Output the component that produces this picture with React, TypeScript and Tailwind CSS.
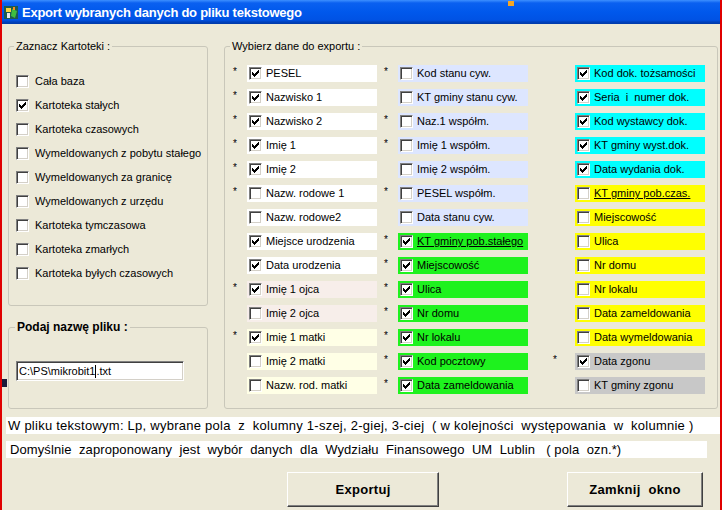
import React from "react";

type Row = { s: boolean; c: boolean; t: string; bg: string; u?: boolean };

const W = "bg-white";
const PINK = "bg-[#F7EEEA]";
const LY = "bg-[#FFFFE6]";
const LB = "bg-[#DDE6FF]";
const GR = "bg-[#1EF21E]";
const CY = "bg-[#00FFFF]";
const YE = "bg-[#FFFF00]";
const GY = "bg-[#C8C8C8]";

const col1: Row[] = [
  { s: true, c: true, t: "PESEL", bg: W },
  { s: true, c: true, t: "Nazwisko 1", bg: W },
  { s: true, c: true, t: "Nazwisko 2", bg: W },
  { s: true, c: true, t: "Imię 1", bg: W },
  { s: true, c: true, t: "Imię 2", bg: W },
  { s: true, c: false, t: "Nazw. rodowe 1", bg: W },
  { s: false, c: false, t: "Nazw. rodowe2", bg: W },
  { s: false, c: true, t: "Miejsce urodzenia", bg: W },
  { s: false, c: true, t: "Data urodzenia", bg: W },
  { s: true, c: true, t: "Imię 1 ojca", bg: PINK },
  { s: false, c: false, t: "Imię 2 ojca", bg: PINK },
  { s: true, c: true, t: "Imię 1 matki", bg: LY },
  { s: false, c: false, t: "Imię 2 matki", bg: LY },
  { s: false, c: false, t: "Nazw. rod. matki", bg: LY },
];

const col2: Row[] = [
  { s: true, c: false, t: "Kod stanu cyw.", bg: LB },
  { s: false, c: false, t: "KT gminy stanu cyw.", bg: LB },
  { s: true, c: false, t: "Naz.1 współm.", bg: LB },
  { s: true, c: false, t: "Imię 1 współm.", bg: LB },
  { s: false, c: false, t: "Imię 2 współm.", bg: LB },
  { s: true, c: false, t: "PESEL współm.", bg: LB },
  { s: false, c: false, t: "Data stanu cyw.", bg: LB },
  { s: true, c: true, t: "KT gminy pob.stałego", bg: GR, u: true },
  { s: true, c: true, t: "Miejscowość", bg: GR },
  { s: true, c: true, t: "Ulica", bg: GR },
  { s: true, c: true, t: "Nr domu", bg: GR },
  { s: true, c: true, t: "Nr lokalu", bg: GR },
  { s: true, c: true, t: "Kod pocztowy", bg: GR },
  { s: true, c: true, t: "Data zameldowania", bg: GR },
];

const col3: Row[] = [
  { s: false, c: true, t: "Kod dok. tożsamości", bg: CY },
  { s: false, c: true, t: "Seria  i  numer dok.", bg: CY },
  { s: false, c: true, t: "Kod wystawcy dok.", bg: CY },
  { s: false, c: true, t: "KT gminy wyst.dok.", bg: CY },
  { s: false, c: true, t: "Data wydania dok.", bg: CY },
  { s: false, c: false, t: "KT gminy pob.czas.", bg: YE, u: true },
  { s: false, c: false, t: "Miejscowość", bg: YE },
  { s: false, c: false, t: "Ulica", bg: YE },
  { s: false, c: false, t: "Nr domu", bg: YE },
  { s: false, c: false, t: "Nr lokalu", bg: YE },
  { s: false, c: false, t: "Data zameldowania", bg: YE },
  { s: false, c: false, t: "Data wymeldowania", bg: YE },
  { s: true, c: true, t: "Data zgonu", bg: GY },
  { s: false, c: false, t: "KT gminy zgonu", bg: GY },
];

const kartoteki: { t: string; c: boolean }[] = [
  { t: "Cała baza", c: false },
  { t: "Kartoteka stałych", c: true },
  { t: "Kartoteka czasowych", c: false },
  { t: "Wymeldowanych z pobytu stałego", c: false },
  { t: "Wymeldowanych za granicę", c: false },
  { t: "Wymeldowanych z urzędu", c: false },
  { t: "Kartoteka tymczasowa", c: false },
  { t: "Kartoteka zmarłych", c: false },
  { t: "Kartoteka byłych czasowych", c: false },
];

function Check({ checked }: { checked: boolean }) {
  return (
    <span className="flex h-[13px] w-[13px] shrink-0 items-center justify-center border-t border-l border-t-[#808080] border-l-[#808080] border-b border-r border-b-white border-r-white bg-white shadow-[inset_1px_1px_0_#404040,inset_-1px_-1px_0_#D4D0C8]">
      {checked && (
        <svg width="7" height="7" viewBox="0 0 7 7" shapeRendering="crispEdges">
          <path
            d="M6 0h1v3h-1v1h-1v1h-1v1h-1v1h-1v-1h-1v-1h-1v-3h1v1h1v1h1v-1h1v-1h1z"
            fill="#000"
          />
        </svg>
      )}
    </span>
  );
}

function Column({ rows, starW }: { rows: Row[]; starW: string }) {
  return (
    <div className="flex flex-col gap-[7px]">
      {rows.map((r, i) => (
        <div key={i} className="flex h-[17px]">
          <span className={`${starW} shrink-0 pt-[1px] text-[10px] leading-[12px] text-black`}>
            {r.s ? "*" : ""}
          </span>
          <div className={`flex w-[130px] items-center ${r.bg}`}>
            <span className="ml-[2px]">
              <Check checked={r.c} />
            </span>
            <span
              className={`ml-[4px] whitespace-pre text-[11px] leading-[17px] text-black ${
                r.u ? "underline" : ""
              }`}
            >
              {r.t}
            </span>
          </div>
        </div>
      ))}
    </div>
  );
}

export default function App() {
  return (
    <div className="relative flex h-[510px] w-[722px] flex-col overflow-hidden border-l-2 border-r-2 border-[#E00000] bg-[#ECE9D8] font-['Liberation_Sans',Arial,sans-serif] text-black">
      {/* title bar */}
      <div className="flex h-[24px] shrink-0 items-center bg-[linear-gradient(to_bottom,#3D8FFF_0px,#0A60F0_3px,#0058EC_12px,#0052E4_20px,#0040BC_22px,#003AA8_24px)]">
        <svg width="17" height="17" viewBox="0 0 17 17" className="ml-[1px]">
          <rect x="1" y="2" width="14" height="13" fill="#1E5A50" />
          <path d="M3 4h5v4H3z" fill="#F6D23C" />
          <path d="M9 5l5 2-2 7-4-2z" fill="#3FBF3F" />
          <path d="M4 9h3v5H4z" fill="#E8E8E8" />
          <path d="M10 3h2v3h-2z" fill="#FF8C1A" />
        </svg>
        <span className="ml-[2px] text-[13px] font-bold leading-none tracking-[-0.25px] text-white">
          Export wybranych danych do pliku tekstowego
        </span>
      </div>

      {/* main area */}
      <div className="mt-[16px] flex pl-[6px]">
        {/* left column */}
        <div className="flex w-[200px] flex-col">
          <fieldset className="h-[266px] rounded-[3px] border border-[#C9C7BA]">
            <legend className="ml-[5px] px-[2px] text-[11px] leading-[12px]">
              Zaznacz Kartoteki :
            </legend>
            <div className="mt-[17px] ml-[7px] flex flex-col">
              {kartoteki.map((k, i) => (
                <div key={i} className="flex h-[24px] items-center">
                  <Check checked={k.c} />
                  <span className="ml-[6px] text-[11px] leading-none">{k.t}</span>
                </div>
              ))}
            </div>
          </fieldset>

          <fieldset className="mt-[14px] h-[89px] rounded-[3px] border border-[#C9C7BA]">
            <legend className="ml-[6px] px-[2px] text-[12px] font-bold leading-[14px]">
              Podaj nazwę pliku :
            </legend>
            <div className="mt-[27px] ml-[7px] flex h-[20px] w-[168px] items-center border-t border-l border-t-[#808080] border-l-[#808080] border-b border-r border-b-white border-r-white bg-white pl-[2px] shadow-[inset_1px_1px_0_#404040,inset_-1px_-1px_0_#D4D0C8]">
              <span className="text-[11px] leading-none">C:\PS\mikrobit1</span>
              <span className="h-[13px] w-[1px] bg-black" />
              <span className="text-[11px] leading-none">.txt</span>
            </div>
          </fieldset>
        </div>

        {/* right group */}
        <fieldset className="ml-[16px] h-[369px] w-[494px] rounded-[3px] border border-[#C9C7BA]">
          <legend className="ml-[5px] px-[2px] text-[11px] leading-[12px]">
            Wybierz dane do exportu :
          </legend>
          <div className="mt-[13px] ml-[8px] flex">
            <Column rows={col1} starW="w-[14px]" />
            <div className="ml-[7px]">
              <Column rows={col2} starW="w-[14px]" />
            </div>
            <div className="ml-[25px]">
              <Column rows={col3} starW="w-[22px]" />
            </div>
          </div>
        </fieldset>
      </div>

      {/* info lines */}
      <div className="mt-[8px] ml-[4px] flex h-[17px] items-center bg-white pl-[2px]">
        <span className="whitespace-pre text-[13px] leading-none tracking-[0.25px]">
          W pliku tekstowym: Lp, wybrane pola  z  kolumny 1-szej, 2-giej, 3-ciej  ( w kolejności  występowania  w  kolumnie )
        </span>
      </div>
      <div className="mt-[7px] ml-[4px] flex h-[17px] w-[701px] items-center bg-white pl-[4px]">
        <span className="whitespace-pre text-[13px] leading-none tracking-[0.1px]">
          Domyślnie  zaproponowany  jest  wybór  danych  dla  Wydziału  Finansowego  UM  Lublin   ( pola  ozn.*)
        </span>
      </div>

      {/* buttons */}
      <div className="mt-[14px] flex">
        <button className="ml-[285px] flex h-[35px] w-[152px] items-center justify-center border-t border-l border-t-white border-l-white border-b border-r border-b-[#404040] border-r-[#404040] bg-[#ECE9D8] shadow-[inset_-1px_-1px_0_#808080] text-[13px] font-bold tracking-[0.3px]">
          Exportuj
        </button>
        <button className="ml-[128px] flex h-[35px] w-[136px] items-center justify-center border-t border-l border-t-white border-l-white border-b border-r border-b-[#404040] border-r-[#404040] bg-[#ECE9D8] shadow-[inset_-1px_-1px_0_#808080] whitespace-pre text-[13px] font-bold tracking-[0.3px]">
          Zamknij  okno
        </button>
      </div>

      {/* overlay artifacts */}
      <span className="absolute left-[506px] top-[1px] h-[5px] w-[6px] bg-[#F5A623]" />
      <span className="absolute left-[-2px] top-[379px] h-[8px] w-[7px] bg-[#1A1A3A]" />
    </div>
  );
}
